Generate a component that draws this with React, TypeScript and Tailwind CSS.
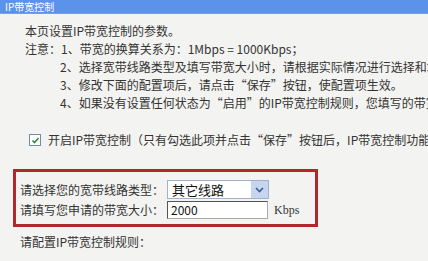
export default function App() {
  const font = { fontFamily: '"Noto Sans CJK SC", "Liberation Sans", sans-serif' };

  return (
    <div
      className="w-[428px] h-[261px] overflow-hidden bg-[#f3f3f1] text-[12px] leading-[18px] text-[#333]"
      style={font}
    >
      {/* title bar */}
      <div className="h-[14px] bg-[#5b92ec] border-b border-[#7a9fd8] pl-[5px] text-[10px] leading-[13px] text-white whitespace-nowrap">
        IP带宽控制
      </div>

      <div className="pt-[8px] pl-[25px] whitespace-nowrap">
        <div>本页设置IP带宽控制的参数。</div>
        <div>注意：1、带宽的换算关系为：1Mbps = 1000Kbps；</div>
        <div className="pl-[35px]">
          2、选择宽带线路类型及填写带宽大小时，请根据实际情况进行选择和填
        </div>
        <div className="pl-[35px]">
          3、修改下面的配置项后，请点击“保存”按钮，使配置项生效。
        </div>
        <div className="pl-[35px]">
          4、如果没有设置任何状态为“启用”的IP带宽控制规则，您填写的带宽
        </div>
      </div>

      <div className="mt-[19px] pl-[29px] flex items-center gap-[7px] whitespace-nowrap">
        <span className="w-[12px] h-[12px] border border-[#6f8fa8] bg-white flex items-center justify-center shrink-0">
          <svg width="9" height="9" viewBox="0 0 9 9">
            <path d="M1.5 4.5 L3.5 6.5 L7.5 2" fill="none" stroke="#2e8b3a" strokeWidth="1.6" />
          </svg>
        </span>
        <span>开启IP带宽控制（只有勾选此项并点击“保存”按钮后，IP带宽控制功能</span>
      </div>

      <div className="mt-[20px] ml-[13px] w-[305px] h-[58px] border-[3px] border-[#b0282c] pl-[4px] pt-[8px] flex flex-col gap-[2px] whitespace-nowrap">
        <div className="flex items-center h-[19px]">
          <span className="w-[147px]">请选择您的宽带线路类型：</span>
          <div className="w-[102px] h-[19px] bg-white border border-[#9eb3c9] flex items-center">
            <span className="flex-1 pl-[4px] text-[13px] text-[#111]">其它线路</span>
            <span className="w-[17px] h-full bg-[#c6d6ee] flex items-center justify-center">
              <svg width="9" height="6" viewBox="0 0 9 6">
                <path d="M1 1 L4.5 4.5 L8 1" fill="none" stroke="#3c5c94" strokeWidth="1.6" />
              </svg>
            </span>
          </div>
        </div>
        <div className="flex items-center h-[18px]">
          <span className="w-[147px]">请填写您申请的带宽大小：</span>
          <div className="w-[101px] h-[18px] bg-white border border-[#555] border-r-[#aaa] border-b-[#aaa] pl-[3px] leading-[16px] text-[#111]">
            2000
          </div>
          <span className="ml-[6px] text-[12px]" style={{ fontFamily: '"Liberation Serif", serif' }}>
            Kbps
          </span>
        </div>
      </div>

      <div className="mt-[6px] pl-[20px] whitespace-nowrap">请配置IP带宽控制规则：</div>
    </div>
  );
}
